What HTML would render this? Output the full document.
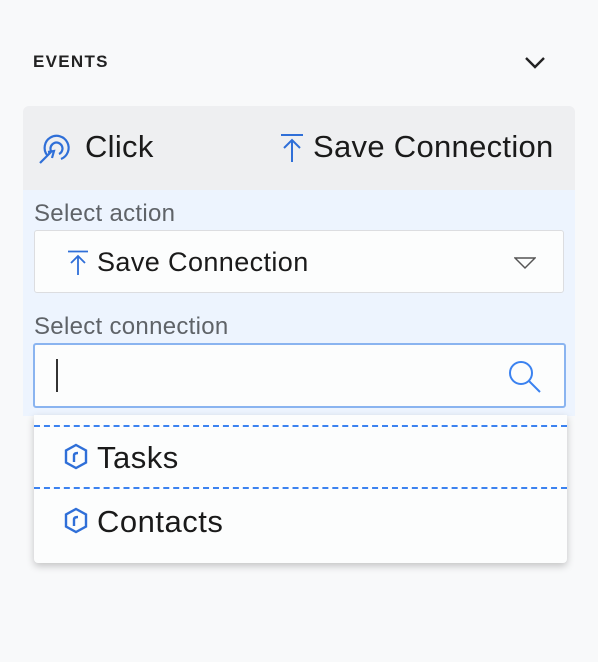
<!DOCTYPE html>
<html><head><style>
body{margin:0;width:598px;height:662px;background:#f8f9fa;font-family:"Liberation Sans",Arial,sans-serif;position:relative;overflow:hidden;color:#1a1a1a}
.a{position:absolute;white-space:nowrap}
</style></head><body>
<div class="a" style="left:33px;top:52px;font-size:17px;font-weight:bold;color:#222;letter-spacing:1.3px">EVENTS</div>
<svg class="a" style="left:524px;top:56px" width="22" height="14" viewBox="0 0 22 14"><path d="M2 2L11 11L20 2" fill="none" stroke="#222" stroke-width="2.4"/></svg>
<div class="a" style="left:23px;top:106px;width:552px;height:84px;background:#eeeff1;border-radius:6px 6px 0 0"></div>
<svg class="a" style="left:37px;top:131px" width="36" height="34" viewBox="0 0 36 34"><path d="M10 24A12 12 0 1 1 24 28" fill="none" stroke="#2f6fd8" stroke-width="2.2"/><path d="M14 20A6 6 0 1 1 22 23" fill="none" stroke="#2f6fd8" stroke-width="2.2"/><path d="M3 32L14 21M11 21L17 20L15 27" fill="none" stroke="#2f6fd8" stroke-width="2.2"/></svg>
<div class="a" style="left:85px;top:129px;font-size:31px;letter-spacing:0.3px">Click</div>
<svg class="a" style="left:280px;top:133px" width="24" height="30" viewBox="0 0 24 30"><path d="M1 2H23M12 29V7M4 15L12 7L20 15" fill="none" stroke="#2f6fd8" stroke-width="2"/></svg>
<div class="a" style="left:313px;top:129px;font-size:31px;letter-spacing:0.3px">Save Connection</div>
<div class="a" style="left:23px;top:190px;width:552px;height:226px;background:#edf4fe"></div>
<div class="a" style="left:34px;top:200px;font-size:24px;color:#5f6368;letter-spacing:0.3px">Select action</div>
<div class="a" style="left:34px;top:230px;width:528px;height:61px;background:#fcfdfd;border:1.5px solid #dcdde0;border-radius:3px"></div>
<svg class="a" style="left:67px;top:250px" width="22" height="26" viewBox="0 0 22 26"><path d="M1 1.5H21M11 25V6M4 13L11 6L18 13" fill="none" stroke="#2f6fd8" stroke-width="1.8"/></svg>
<div class="a" style="left:97px;top:247px;font-size:27px;letter-spacing:0.4px">Save Connection</div>
<svg class="a" style="left:514px;top:257px" width="22" height="13" viewBox="0 0 22 13"><path d="M1 1H21L11 11Z" fill="none" stroke="#555" stroke-width="1.5"/></svg>
<div class="a" style="left:34px;top:313px;font-size:24px;color:#5f6368;letter-spacing:0.3px">Select connection</div>
<div class="a" style="left:33px;top:343px;width:529px;height:61px;background:#fcfdfd;border:2px solid #8ab4f0;border-radius:3px"></div>
<div class="a" style="left:56px;top:359px;width:2px;height:33px;background:#333"></div>
<svg class="a" style="left:507px;top:359px" width="36" height="36" viewBox="0 0 36 36"><circle cx="14" cy="14" r="11" fill="none" stroke="#3b82f0" stroke-width="2"/><path d="M22 22L33 33" stroke="#3b82f0" stroke-width="2"/></svg>
<div class="a" style="left:34px;top:415px;width:533px;height:148px;background:#fcfdfd;border-radius:0 0 4px 4px;box-shadow:0 3px 8px rgba(0,0,0,.22)"></div>
<div class="a" style="left:34px;top:425px;width:533px;border-top:2px dashed #3b82f0"></div>
<div class="a" style="left:34px;top:487px;width:533px;border-top:2px dashed #3b82f0"></div>
<svg class="a" style="left:61px;top:442px" width="30" height="30" viewBox="0 0 30 30"><path d="M15 3L25 8.5V20.5L15 26L5 20.5V8.5Z" fill="none" stroke="#2f6fd8" stroke-width="2.4"/><path d="M13 20V13.5Q13 11 17 11" fill="none" stroke="#2f6fd8" stroke-width="2.4"/></svg>
<div class="a" style="left:97px;top:440px;font-size:31px;letter-spacing:0.5px">Tasks</div>
<svg class="a" style="left:61px;top:506px" width="30" height="30" viewBox="0 0 30 30"><path d="M15 3L25 8.5V20.5L15 26L5 20.5V8.5Z" fill="none" stroke="#2f6fd8" stroke-width="2.4"/><path d="M13 20V13.5Q13 11 17 11" fill="none" stroke="#2f6fd8" stroke-width="2.4"/></svg>
<div class="a" style="left:97px;top:504px;font-size:31px;letter-spacing:0.5px">Contacts</div>
</body></html>
